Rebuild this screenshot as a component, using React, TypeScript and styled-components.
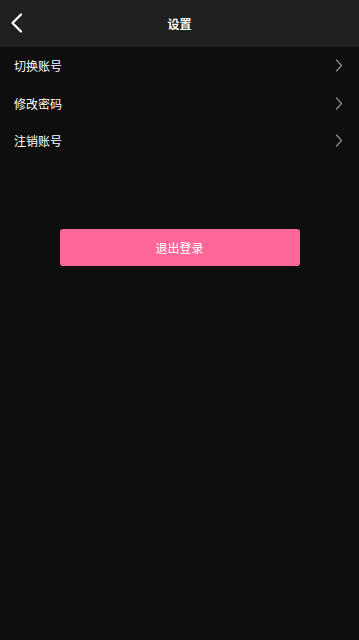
import React from "react";
import styled, { createGlobalStyle } from "styled-components";

const GlobalStyle = createGlobalStyle`
  html, body {
    margin: 0;
    padding: 0;
    background: #0e0e0e;
  }
  body {
    font-family: "Noto Sans CJK SC", "Liberation Sans", sans-serif;
  }
`;

const items = ["切换账号", "修改密码", "注销账号"];

const App: React.FC = () => {
  return (
    <>
      <GlobalStyle />
      <Page>
        <Header>
          <BackButton aria-label="返回">
            <svg width="14" height="20" viewBox="0 0 14 20" fill="none">
              <path
                d="M11 1.5L2.5 10L11 18.5"
                stroke="#ffffff"
                strokeWidth="2.2"
                strokeLinecap="round"
                strokeLinejoin="round"
              />
            </svg>
          </BackButton>
          <Title>{"设置"}</Title>
        </Header>
        <List>
          {items.map((label) => (
            <Row key={label}>
              <Label>{label}</Label>
              <svg width="8" height="13" viewBox="0 0 8 13" fill="none">
                <path
                  d="M1.5 1L6.5 6.5L1.5 12"
                  stroke="#8a8a8a"
                  strokeWidth="1.3"
                  strokeLinecap="round"
                  strokeLinejoin="round"
                />
              </svg>
            </Row>
          ))}
        </List>
        <LogoutButton>{"退出登录"}</LogoutButton>
      </Page>
    </>
  );
};

const Page = styled.div`
  width: 100%;
  min-height: 100vh;
  background: #0e0e0e;
  display: flex;
  flex-direction: column;
`;

const Header = styled.div`
  position: relative;
  height: 47px;
  background: #202020;
  display: flex;
  align-items: center;
  justify-content: center;
`;

const BackButton = styled.button`
  position: absolute;
  left: 10px;
  top: 13px;
  padding: 0;
  border: 0;
  background: none;
  display: flex;
`;

const Title = styled.div`
  color: #ffffff;
  font-size: 12px;
  font-weight: bold;
`;

const List = styled.div`
  display: flex;
  flex-direction: column;
`;

const Row = styled.div`
  height: 37.5px;
  display: flex;
  align-items: center;
  justify-content: space-between;
  padding: 0 16px 0 14px;
  box-sizing: border-box;
`;

const Label = styled.span`
  color: #ffffff;
  font-size: 12px;
`;

const LogoutButton = styled.button`
  margin: 69.5px auto 0;
  width: 240px;
  height: 37px;
  border: 0;
  border-radius: 3px;
  background: #ff6699;
  color: #ffffff;
  font-family: "Noto Sans CJK SC", "Liberation Sans", sans-serif;
  font-size: 12px;
`;

export default App;
